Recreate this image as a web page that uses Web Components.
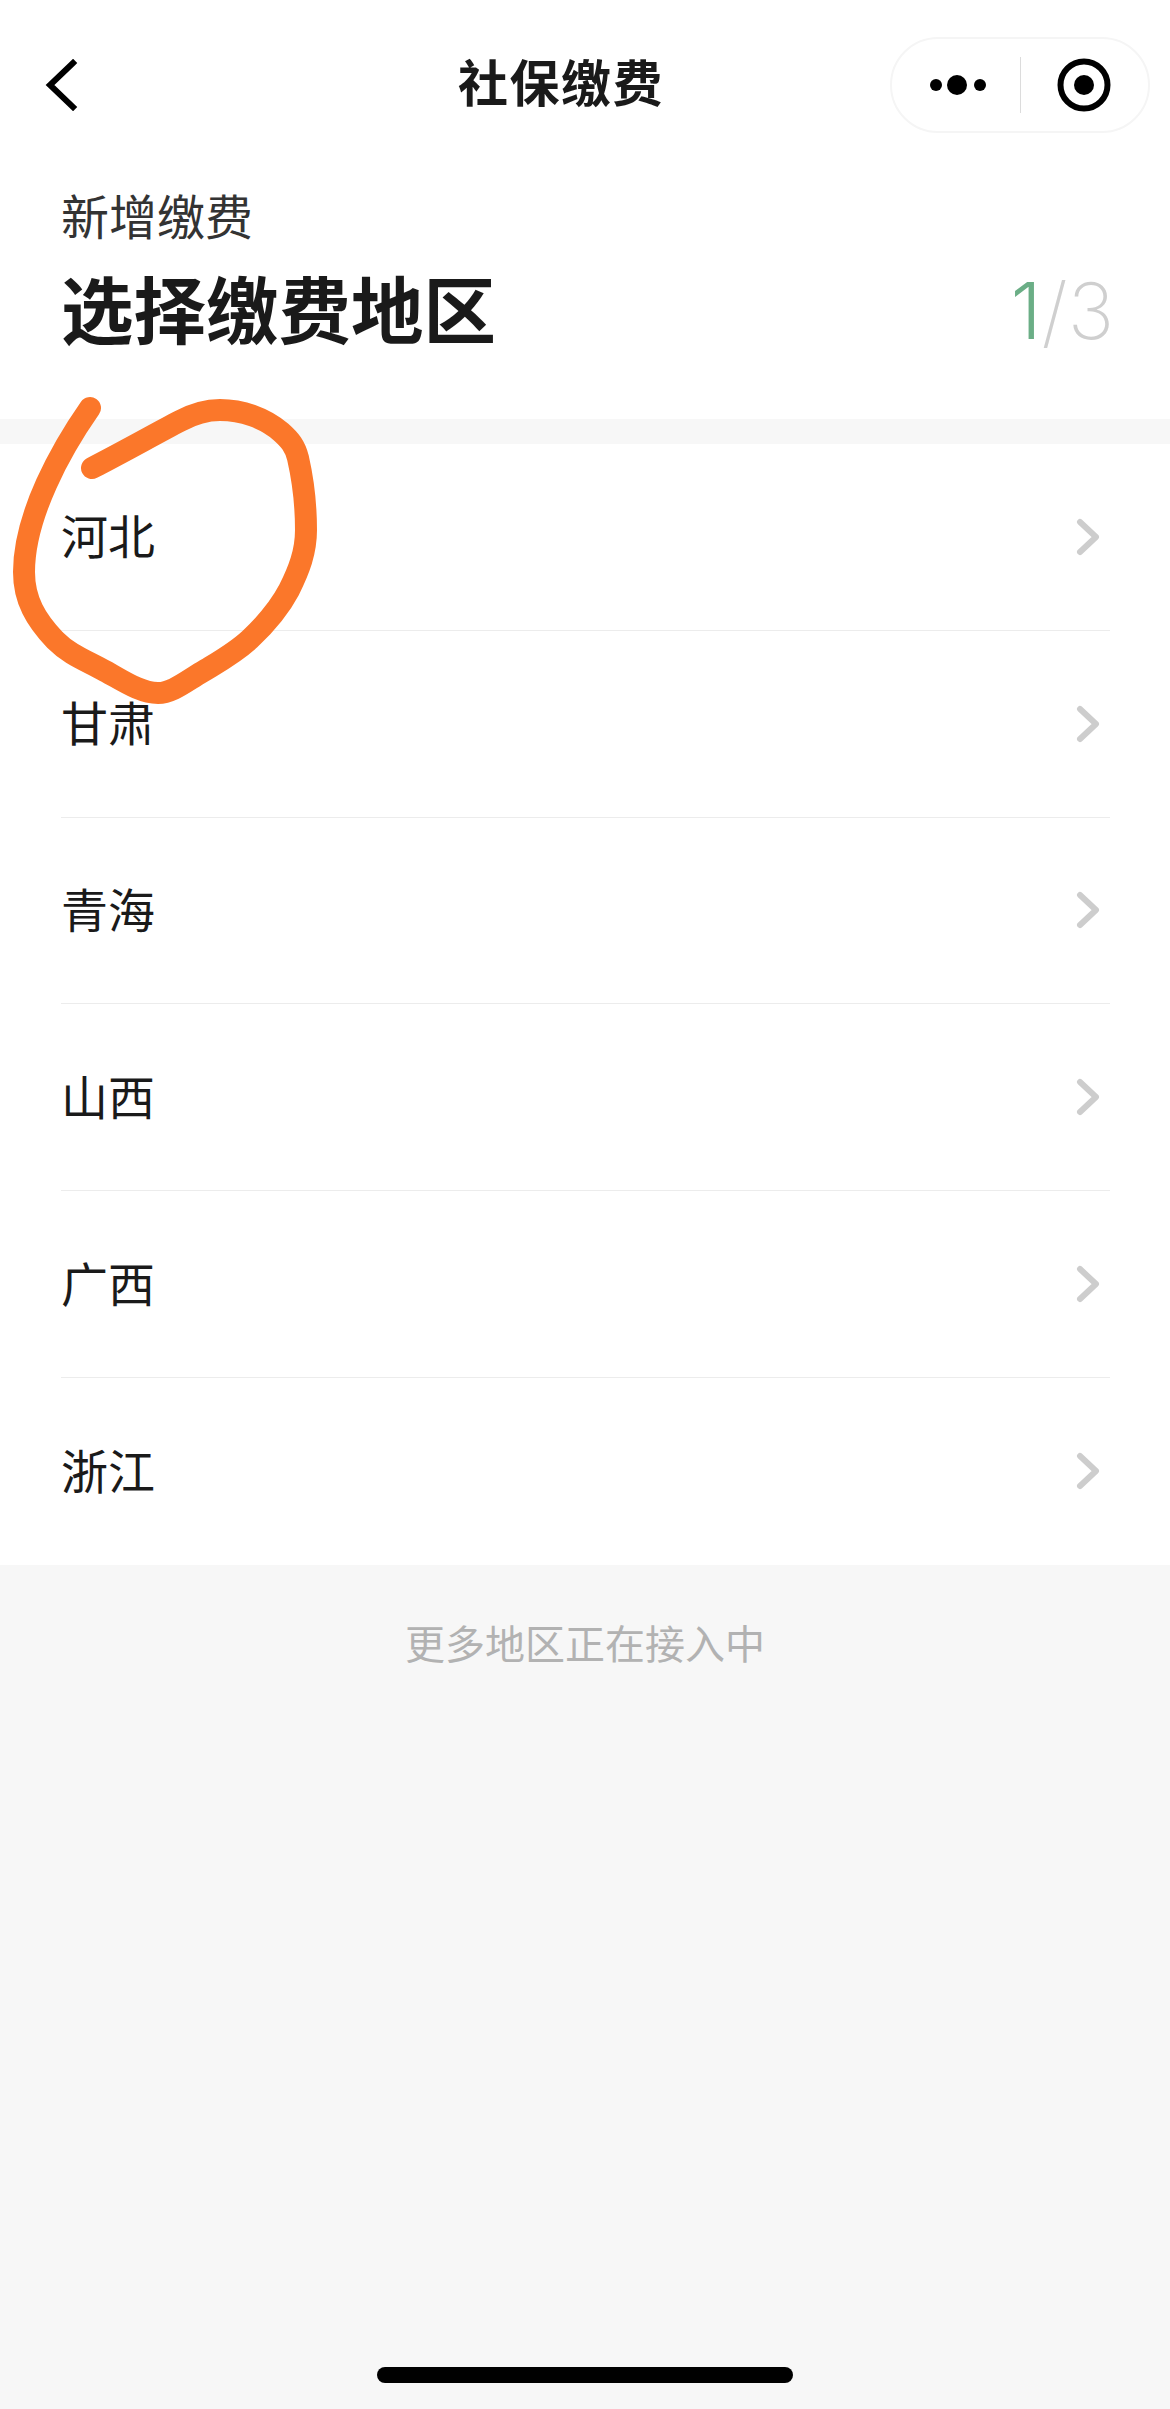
<!doctype html>
<html lang="zh">
<head>
<meta charset="utf-8">
<title>社保缴费</title>
<style>
  html, body { margin: 0; padding: 0; }
  body {
    background: #f7f7f7;
    color: #1a1a1a;
    font-family: "Noto Sans CJK SC", "Noto Sans", sans-serif;
  }
</style>
</head>
<body>
<social-page>
  <nav-bar>社保缴费</nav-bar>
  <step-header step="1" total="3" caption="新增缴费">选择缴费地区</step-header>
  <region-list>
    <region-row>河北</region-row>
    <region-row>甘肃</region-row>
    <region-row>青海</region-row>
    <region-row>山西</region-row>
    <region-row>广西</region-row>
    <region-row last>浙江</region-row>
  </region-list>
  <more-note>更多地区正在接入中</more-note>
  <home-bar></home-bar>
  <ink-circle></ink-circle>
</social-page>

<script>
class SocialPage extends HTMLElement {
  connectedCallback () {
    this.attachShadow({ mode: 'open' })
    this.shadowRoot.innerHTML = `
      <style>
        :host {
          display: flex;
          flex-direction: column;
          position: relative;
          width: 1170px;
          height: 2409px;
          overflow: hidden;
        }
      </style>
      <slot></slot>
    `
  }
}

class NavBar extends HTMLElement {
  connectedCallback () {
    this.attachShadow({ mode: 'open' })
    this.shadowRoot.innerHTML = `
      <style>
        :host {
          display: flex;
          align-items: center;
          height: 170px;
          box-sizing: border-box;
          padding: 0 20px 0 44px;
          background: #fff;
        }
        .back { display: block; width: 36px; height: 52px; }
        .title {
          margin-left: 378px;
          padding-bottom: 10px;
          font-size: 50px;
          font-weight: 700;
          letter-spacing: 1.5px;
          line-height: 60px;
          color: #1a1a1a;
        }
        capsule-menu { margin-left: auto; }
      </style>
      <svg class="back" viewBox="0 0 36 52" fill="none" stroke="#000" stroke-width="6" stroke-linecap="square">
        <path d="M29 4 6 26l23 22"/>
      </svg>
      <div class="title"><slot></slot></div>
      <capsule-menu></capsule-menu>
    `
  }
}

class CapsuleMenu extends HTMLElement {
  connectedCallback () {
    this.attachShadow({ mode: 'open' })
    this.shadowRoot.innerHTML = `
      <style>
        :host {
          display: flex;
          align-items: center;
          width: 260px;
          height: 96px;
          box-sizing: border-box;
          border: 2px solid #f5f5f5;
          border-radius: 48px;
          background: #fff;
        }
        .side { flex: 1; display: flex; justify-content: center; align-items: center; }
        .rule { width: 1px; height: 56px; background: #dcdcdc; }
        svg { display: block; }
        .dots { margin-left: 5px; }
      </style>
      <div class="side">
        <svg class="dots" width="60" height="24" viewBox="0 0 60 24" fill="#000">
          <circle cx="8" cy="12" r="6"/><circle cx="29" cy="12" r="10"/><circle cx="52" cy="12" r="6"/>
        </svg>
      </div>
      <div class="rule"></div>
      <div class="side">
        <svg width="54" height="54" viewBox="0 0 54 54">
          <circle cx="27" cy="27" r="23.5" fill="none" stroke="#000" stroke-width="6"/>
          <circle cx="27" cy="27" r="10" fill="#000"/>
        </svg>
      </div>
    `
  }
}

class StepHeader extends HTMLElement {
  connectedCallback () {
    this.attachShadow({ mode: 'open' })
    this.shadowRoot.innerHTML = `
      <style>
        :host {
          display: flex;
          justify-content: space-between;
          align-items: flex-start;
          height: 249px;
          box-sizing: border-box;
          padding: 14px 56px 0 61px;
          background: #fff;
        }
        .caption { margin-bottom: 11px; font-size: 48px; line-height: 60px; color: #333; }
        .heading { font-size: 72.5px; font-weight: 700; line-height: 104px; color: #1a1a1a; }
        .step {
          margin-top: 77px;
          font-family: Inter, Roboto, sans-serif;
          font-size: 78px;
          font-weight: 200;
          line-height: 100px;
          color: #cfcfcf;
        }
        .step b { font-weight: 300; color: #6bae86; }
      </style>
      <div>
        <div class="caption">${this.getAttribute('caption')}</div>
        <div class="heading"><slot></slot></div>
      </div>
      <div class="step"><b>${this.getAttribute('step')}</b>/${this.getAttribute('total')}</div>
    `
  }
}

class RegionList extends HTMLElement {
  connectedCallback () {
    this.attachShadow({ mode: 'open' })
    this.shadowRoot.innerHTML = `
      <style>
        :host {
          display: block;
          margin-top: 25px;
          background: #fff;
        }
      </style>
      <slot></slot>
    `
  }
}

class RegionRow extends HTMLElement {
  connectedCallback () {
    this.attachShadow({ mode: 'open' })
    this.shadowRoot.innerHTML = `
      <style>
        :host {
          display: block;
          padding-left: 61px;
          padding-right: 60px;
        }
        .row {
          display: flex;
          align-items: center;
          justify-content: space-between;
          height: 186.8px;
          box-sizing: border-box;
          border-bottom: 1px solid #ececec;
          font-size: 47px;
          color: #1a1a1a;
        }
        :host([last]) .row { border-bottom: 0; }
        .label { padding-bottom: 6px; }
        svg { display: block; margin-right: 10px; }
      </style>
      <div class="row">
        <div class="label"><slot></slot></div>
        <svg width="24" height="38" viewBox="0 0 24 38" fill="none" stroke="#cdcdcd" stroke-width="6" stroke-linecap="round" stroke-linejoin="round">
          <path d="M4 4 20 19 4 34"/>
        </svg>
      </div>
    `
  }
}

class MoreNote extends HTMLElement {
  connectedCallback () {
    this.attachShadow({ mode: 'open' })
    this.shadowRoot.innerHTML = `
      <style>
        :host {
          display: block;
          padding-top: 45px;
          text-align: center;
          font-size: 40px;
          line-height: 64px;
          color: #b2b2b2;
        }
      </style>
      <slot></slot>
    `
  }
}

class HomeBar extends HTMLElement {
  connectedCallback () {
    this.attachShadow({ mode: 'open' })
    this.shadowRoot.innerHTML = `
      <style>
        :host {
          display: block;
          margin-top: auto;
          padding-bottom: 26px;
        }
        div {
          width: 416px;
          height: 16px;
          margin: 0 auto;
          border-radius: 8px;
          background: #000;
        }
      </style>
      <div></div>
    `
  }
}

// hand drawn mark someone put over the screenshot
class InkCircle extends HTMLElement {
  connectedCallback () {
    this.attachShadow({ mode: 'open' })
    this.shadowRoot.innerHTML = `
      <style>
        :host { position: absolute; left: 0; top: 0; display: block; width: 340px; height: 720px; pointer-events: none; }
        svg { display: block; }
      </style>
      <svg width="340" height="720" viewBox="0 0 340 720" fill="none" stroke="#fb772a" stroke-width="22" stroke-linecap="round" stroke-linejoin="round">
        <path d="M90 408C62 448 24 515 24 572C24 600 36 620 55 640C70 655 85 660 105 671C122 680 140 693 158 693C172 693 185 682 202 672C220 661 235 653 250 639C268 622 280 607 289 590C299 570 306 552 306 530C306 505 303 480 298 458C295 446 290 440 281 432C265 418 242 410 220 410C205 410 193 414 180 421C155 434 125 451 92 468"/>
      </svg>
    `
  }
}

customElements.define('social-page', SocialPage)
customElements.define('nav-bar', NavBar)
customElements.define('capsule-menu', CapsuleMenu)
customElements.define('step-header', StepHeader)
customElements.define('region-list', RegionList)
customElements.define('region-row', RegionRow)
customElements.define('more-note', MoreNote)
customElements.define('home-bar', HomeBar)
customElements.define('ink-circle', InkCircle)
</script>
</body>
</html>
